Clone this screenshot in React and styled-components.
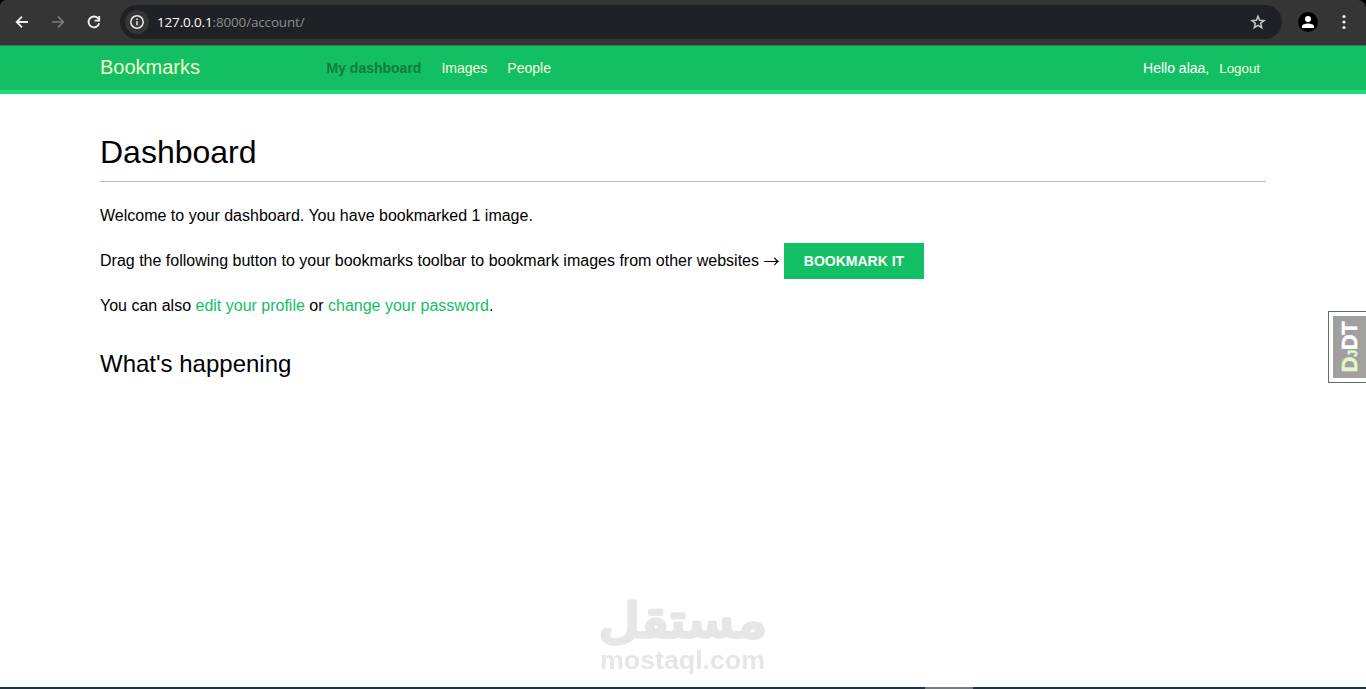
import React from "react";
import styled, { createGlobalStyle } from "styled-components";

const GlobalStyle = createGlobalStyle`
  * {
    box-sizing: border-box;
  }
  body {
    margin: 0;
    background-color: #000000;
    color: #000000;
    font-family: "Liberation Sans", Arial, sans-serif;
    font-size: 16px;
    overflow: hidden;
  }
`;

const Window = styled.div`
  display: flex;
  flex-direction: column;
  height: 689px;
`;

const Toolbar = styled.div`
  display: flex;
  align-items: center;
  flex: 0 0 45px;
  padding: 0 15px 1px 14px;
  background-color: #353535;
  border-radius: 6px 8px 0 0;
`;

const IconHolder = styled.span`
  display: flex;
  align-items: center;
  justify-content: center;
  width: 16px;
  height: 16px;
  margin-right: 20px;
  color: ${(props) => props.$color || "#f1f1f1"};
`;

const AddressBar = styled.div`
  display: flex;
  align-items: center;
  flex: 1;
  height: 34px;
  margin: 0 16px 0 -2px;
  padding: 0 16px 0 5px;
  border-radius: 17px;
  background-color: #202124;
`;

const InfoCircle = styled.span`
  display: flex;
  align-items: center;
  justify-content: center;
  width: 24px;
  height: 24px;
  margin-right: 8px;
  border-radius: 50%;
  background-color: #353535;
`;

const Url = styled.span`
  flex: 1;
  color: #8a8b8d;
  font-family: "Open Sans", "Noto Sans", sans-serif;
  font-size: 13.5px;
  letter-spacing: -0.16px;
  line-height: 18px;

  b {
    color: #ffffff;
    font-weight: 400;
  }
`;

const Avatar = styled.span`
  display: flex;
  align-items: center;
  justify-content: center;
  width: 20px;
  height: 20px;
  margin-right: 19px;
  border-radius: 50%;
  background-color: #000000;
`;

const Header = styled.header`
  display: flex;
  align-items: flex-start;
  flex: 0 0 49px;
  padding: 10px 100px 0 100px;
  background-color: #12c063;
  border-top: 1px solid #4b7259;
  border-bottom: 4px solid #1fdf7a;
  color: #ffffff;
  font-size: 14px;
  line-height: 24px;
`;

const Logo = styled.span`
  width: 226.5px;
  color: #f3fbc9;
  font-size: 20px;
  line-height: 23px;
`;

const Menu = styled.ul`
  display: flex;
  flex: 1;
  gap: 20px;
  margin: 0;
  padding: 0;
  list-style: none;
`;

const MenuItem = styled.li`
  color: ${(props) => (props.$selected ? "#127a3a" : "#f8fbe0")};
  font-weight: ${(props) => (props.$selected ? "bold" : "normal")};
`;

const LogoutButton = styled.button`
  margin-left: 4px;
  padding: 0 6px;
  border: none;
  background: none;
  color: #f8fbe0;
  font-family: inherit;
  font-size: 13.333px;
  line-height: 26px;
`;

const Page = styled.div`
  display: flex;
  flex: 1;
  background-color: #ffffff;
`;

const Content = styled.main`
  flex: 1;
  padding: 38px 100px 0 100px;
`;

const Title = styled.h1`
  height: 50px;
  margin: 0 0 21px 0;
  border-bottom: 1px solid #bbbbbb;
  font-size: 32px;
  font-weight: 400;
  line-height: 40px;
`;

const Text = styled.p`
  display: flex;
  align-items: center;
  height: 25px;
  margin: 0 0 20px 0;
  white-space: pre;
`;

const TextLink = styled.a`
  color: #12c063;
`;

const Arrow = styled.span`
  width: 16px;
  margin-bottom: 2px;
  font-family: "Noto Sans CJK JP", sans-serif;
  line-height: 20px;
`;

const BookmarkButton = styled.a`
  width: 140px;
  margin-left: 4.5px;
  padding: 10px 0;
  background-color: #12c063;
  color: #ffffff;
  font-size: 14px;
  font-weight: bold;
  line-height: 16px;
  text-align: center;
`;

const SubTitle = styled.h2`
  margin: 32px 0 0 0;
  font-size: 24px;
  font-weight: 400;
  line-height: 28px;
`;

const DebugHandle = styled.div`
  position: fixed;
  top: 311px;
  right: 0;
  width: 38px;
  height: 72px;
  padding: 4px 0 4px 4px;
  border: 1px solid #5c6f62;
  border-right: none;
  background-color: #ffffff;
`;

const DebugLabel = styled.div`
  display: flex;
  justify-content: flex-end;
  align-items: flex-end;
  width: 33px;
  height: 62px;
  padding: 0 8px 6px 0;
  background-color: #a0a09e;
  color: #ffffff;
  font-size: 22px;
  font-weight: bold;
  line-height: 16px;
  -webkit-text-stroke: 0.5px;

  span {
    writing-mode: vertical-rl;
    text-orientation: sideways;
    transform: rotate(180deg);
    letter-spacing: -0.5px;
  }
  i {
    color: #e2f7cd;
    font-style: normal;
  }
  small {
    font-size: 13px;
    line-height: 1px;
  }
`;

const Watermark = styled.div`
  position: fixed;
  top: 590px;
  left: 596px;
  color: #e6e6e6;
`;

const Taskbar = styled.div`
  display: flex;
  flex: 0 0 2px;
  padding-left: 925px;
  background-color: #1f3440;
`;

const ActiveTask = styled.span`
  width: 48px;
  background-color: #747c84;
`;

const App = () => {
  return (
    <Window>
      <GlobalStyle />
      <Toolbar>
        <IconHolder>
          <svg width="16" height="16" viewBox="0 0 16 16" fill="none" stroke="currentColor" strokeWidth="1.8">
            <path d="M14 8H3.500M8 2.700 2.700 8 8 13.300" />
          </svg>
        </IconHolder>
        <IconHolder $color="#7b7b7b">
          <svg width="16" height="16" viewBox="0 0 16 16" fill="none" stroke="currentColor" strokeWidth="1.7">
            <path d="M2 8h10.500M8 2.700 13.300 8 8 13.300" />
          </svg>
        </IconHolder>
        <IconHolder>
          <svg width="16" height="16" viewBox="0 0 16 16" fill="none" stroke="currentColor" strokeWidth="1.8">
            <path d="M13.200 9.300A5.400 5.400 0 1 1 12 4.300L13.500 5.900" />
            <path d="M13.200 2v4.700H8.600" />
          </svg>
        </IconHolder>
        <AddressBar>
          <InfoCircle>
            <svg width="16" height="16" viewBox="0 0 16 16" fill="none" stroke="#e8e8e8" strokeWidth="1.5">
              <circle cx="8" cy="8" r="6.200" />
              <path d="M8 7.200v4M8 4.600v1.500" />
            </svg>
          </InfoCircle>
          <Url>
            <b>127.0.0.1</b>:8000/account/
          </Url>
          <svg width="16" height="16" viewBox="0 0 16 16" fill="none" stroke="#c7c7c7" strokeWidth="1.5">
            <path d="M8 2.300l1.600 4 4.400.3-3.400 2.800 1.100 4.300L8 11.400l-3.700 2.300 1.100-4.300L2 6.600l4.400-.3z" />
          </svg>
        </AddressBar>
        <Avatar>
          <svg width="14" height="14" viewBox="0 0 14 14" fill="#ffffff">
            <circle cx="7" cy="4" r="3" />
            <path d="M1 13v-1.800C1 9.300 4.600 8.400 7 8.400s6 .9 6 2.800V13z" />
          </svg>
        </Avatar>
        <svg width="14" height="16" viewBox="0 0 14 16" fill="#f1f1f1">
          <circle cx="7" cy="2.500" r="1.600" />
          <circle cx="7" cy="8" r="1.600" />
          <circle cx="7" cy="13.500" r="1.600" />
        </svg>
      </Toolbar>
      <Header>
        <Logo>Bookmarks</Logo>
        <Menu>
          <MenuItem $selected>My dashboard</MenuItem>
          <MenuItem>Images</MenuItem>
          <MenuItem>People</MenuItem>
        </Menu>
        <span>Hello alaa,</span>
        <LogoutButton>Logout</LogoutButton>
      </Header>
      <Page>
        <Content>
          <Title>Dashboard</Title>
          <Text>Welcome to your dashboard. You have bookmarked 1 image.</Text>
          <Text>
            Drag the following button to your bookmarks toolbar to bookmark
            images from other websites <Arrow>→</Arrow>
            <BookmarkButton>BOOKMARK IT</BookmarkButton>
          </Text>
          <Text>
            You can also <TextLink>edit your profile</TextLink> or{" "}
            <TextLink>change your password</TextLink>.
          </Text>
          <SubTitle>What's happening</SubTitle>
        </Content>
      </Page>
      <Taskbar>
        <ActiveTask />
      </Taskbar>
      <DebugHandle>
        <DebugLabel>
          <span>
            <i>
              D<small>J</small>
            </i>
            DT
          </span>
        </DebugLabel>
      </DebugHandle>
      <Watermark>
        <svg width="174" height="90" viewBox="0 0 174 90" fill="currentColor" overflow="visible">
          <text x="87" y="47" fontFamily="DejaVu Sans" fontSize="47" textAnchor="middle" stroke="currentColor" strokeWidth="3.6" strokeLinejoin="round" textLength="168" lengthAdjust="spacingAndGlyphs">
            مستقل
          </text>
          <text x="4" y="79" fontFamily="Liberation Sans" fontWeight="bold" fontSize="25" textLength="165" lengthAdjust="spacingAndGlyphs">
            mostaql.com
          </text>
        </svg>
      </Watermark>
    </Window>
  );
};

export default App;
